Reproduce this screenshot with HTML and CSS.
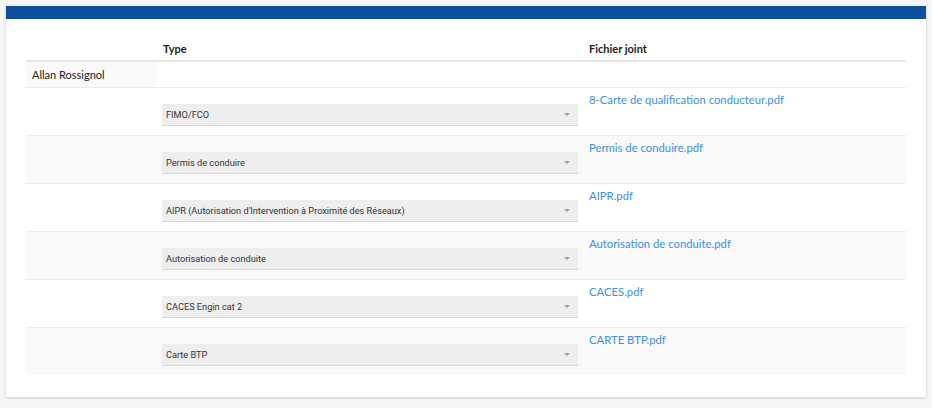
FILE: index.html
```html
<!DOCTYPE html>
<html lang="fr">
<head>
<meta charset="utf-8">
<title>Fichiers joints</title>
<link rel="stylesheet" href="styles.css">
</head>
<body>
<div class="card">
  <div class="card-bar"></div>
  <div class="card-body">
    <table class="docs">
      <colgroup>
        <col class="c-name">
        <col class="c-type">
        <col class="c-file">
      </colgroup>
      <thead>
        <tr><th></th><th>Type</th><th>Fichier joint</th></tr>
      </thead>
      <tbody>
        <tr class="person"><td class="name">Allan Rossignol</td><td></td><td></td></tr>
        <tr class="doc">
          <td></td>
          <td><div class="select"><span>FIMO/FCO</span><i class="caret"></i></div></td>
          <td><a href="#">8-Carte de qualification conducteur.pdf</a></td>
        </tr>
        <tr class="doc alt">
          <td></td>
          <td><div class="select"><span>Permis de conduire</span><i class="caret"></i></div></td>
          <td><a href="#">Permis de conduire.pdf</a></td>
        </tr>
        <tr class="doc">
          <td></td>
          <td><div class="select"><span>AIPR (Autorisation d'Intervention à Proximité des Réseaux)</span><i class="caret"></i></div></td>
          <td><a href="#">AIPR.pdf</a></td>
        </tr>
        <tr class="doc alt">
          <td></td>
          <td><div class="select"><span>Autorisation de conduite</span><i class="caret"></i></div></td>
          <td><a href="#">Autorisation de conduite.pdf</a></td>
        </tr>
        <tr class="doc">
          <td></td>
          <td><div class="select"><span>CACES Engin cat 2</span><i class="caret"></i></div></td>
          <td><a href="#">CACES.pdf</a></td>
        </tr>
        <tr class="doc alt last">
          <td></td>
          <td><div class="select"><span>Carte BTP</span><i class="caret"></i></div></td>
          <td><a href="#">CARTE BTP.pdf</a></td>
        </tr>
      </tbody>
    </table>
  </div>
</div>
</body>
</html>
```

FILE: styles.css
```css
html, body {
  margin: 0;
  padding: 0;
  background: #f5f6f8;
}
body {
  font-family: Lato, "Open Sans", "Liberation Sans", sans-serif;
  color: #222;
  padding: 6px;
}
.card {
  width: 920px;
  background: #fff;
  box-shadow: 0 1px 3px rgba(0,0,0,0.18);
}
.card-bar {
  height: 13px;
  background: #0e4f9c;
}
.card-body {
  padding: 17px 20px 22px 20px;
}
.docs {
  width: 880px;
  border-collapse: collapse;
  table-layout: fixed;
}
.c-name { width: 131px; }
.c-type { width: 426px; }
.c-file { width: 323px; }
.docs th {
  text-align: left;
  font-weight: 700;
  font-size: 11px;
  color: #222;
  height: 24px;
  padding: 0 6px;
  border-bottom: 2px solid #e6e6e6;
  vertical-align: middle;
}
.person td {
  height: 25px;
  padding: 0 6px;
  border-bottom: 1px solid #ececec;
  font-size: 11px;
  color: #222;
}
.person td.name { background: #f9f9f9; }
.doc td {
  height: 47px;
  padding: 0 5px;
  border-bottom: 1px solid #ececec;
  vertical-align: top;
}
.doc.last td { border-bottom: none; }
.doc.alt td { background: #f9f9f9; }
.doc td:nth-child(3) { padding: 0 6px; }
.select {
  margin-top: 16px;
  height: 21px;
  background: #eeeeee;
  border-bottom: 1px solid #d6d6d6;
  display: flex;
  align-items: center;
  justify-content: space-between;
  padding: 0 8px 0 4px;
  font-family: Roboto, "Liberation Sans", sans-serif;
  font-size: 9.2px;
  color: #333;
}
.caret {
  width: 0;
  height: 0;
  border-left: 3px solid transparent;
  border-right: 3px solid transparent;
  border-top: 3px solid #a0a0a0;
}
.doc a {
  display: inline-block;
  margin-top: 5px;
  color: #3c8ef0;
  text-decoration: none;
  font-size: 11.3px;
}
```
